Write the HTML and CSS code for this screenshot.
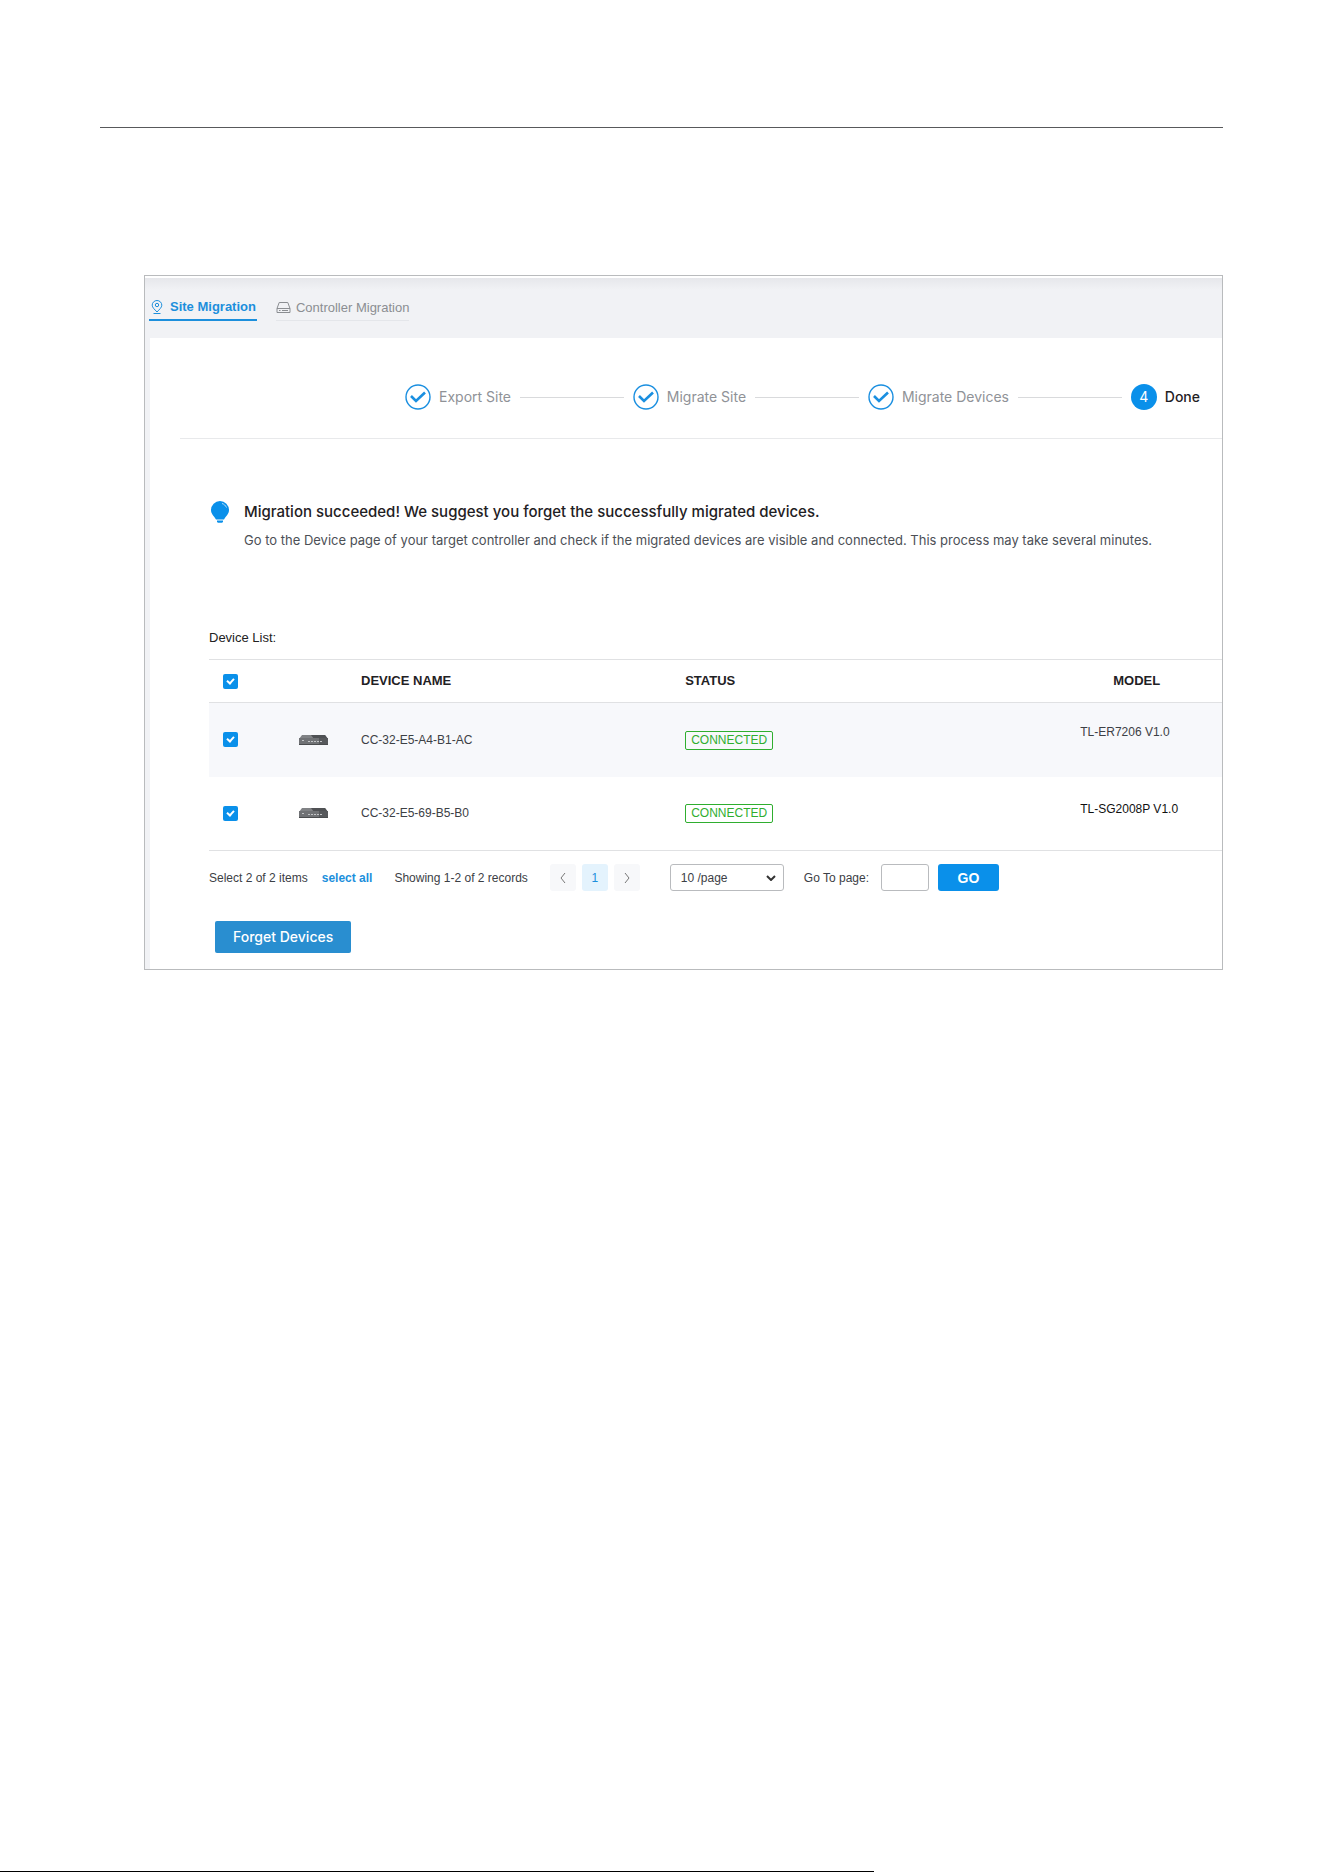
FILE: index.html
```html
<!DOCTYPE html>
<html lang="en">
<head>
    <meta charset="UTF-8">
    <title>Site Migration</title>
    <link rel="stylesheet" href="styles.css">
</head>
<body>
<header class="page-head"></header>
<main class="shot">
    <nav class="tabs">
        <a class="tab current" href="#site">
            <svg width="12" height="15" viewBox="0 0 12 15" fill="none" stroke="currentColor">
                <path d="M6 12C3.500 9.300 1.200 7.500 1.200 5.200a4.800 4.700 0 0 1 9.600 0C10.800 7.500 8.500 9.300 6 12z"/>
                <circle cx="6" cy="5" r="1.700"/>
                <path d="M2.500 13.500h7"/>
            </svg>
            Site Migration
        </a>
        <a class="tab" href="#controller">
            <svg width="15" height="13" viewBox="0 0 15 13" fill="none" stroke="currentColor">
                <path d="M1 7.500L3.200 1.500h8.600L14 7.500v4H1zM1 7.500h13M3 9.500h1.500M6 9.500h6"/>
            </svg>
            Controller Migration
        </a>
    </nav>
    <section class="panel">
        <ol class="steps">
            <li class="step">
                <svg class="tick" viewBox="0 0 26 26"><circle cx="13" cy="13" r="12"/><path d="M6 12l5 5 9-8.500"/></svg>
                Export Site
            </li>
            <li class="line"></li>
            <li class="step">
                <svg class="tick" viewBox="0 0 26 26"><circle cx="13" cy="13" r="12"/><path d="M6 12l5 5 9-8.500"/></svg>
                Migrate Site
            </li>
            <li class="line"></li>
            <li class="step">
                <svg class="tick" viewBox="0 0 26 26"><circle cx="13" cy="13" r="12"/><path d="M6 12l5 5 9-8.500"/></svg>
                Migrate Devices
            </li>
            <li class="line"></li>
            <li class="step active"><span class="num">4</span>Done</li>
        </ol>
        <div class="content">
            <div class="notice">
                <svg width="18" height="23" viewBox="0 0 18 23">
                    <path fill="#0a90ea" d="M9 0a9 9 0 0 1 9 9c0 4-3 6-5 9.500H5C3 15 0 13 0 9a9 9 0 0 1 9-9zM6 19.500h6v1.500l-1 .8H7l-1-.8z"/>
                    <path fill="none" stroke="#b5ddfa" d="M11 2.500c2 .5 3.500 2 4.500 4"/>
                </svg>
                <div>
                    <h1>Migration succeeded! We suggest you forget the successfully migrated devices.</h1>
                    <p>Go to the Device page of your target controller and check if the migrated devices are visible and connected. This process may take several minutes.</p>
                </div>
            </div>
            <h2>Device List:</h2>
            <table class="devices">
                <colgroup>
                    <col class="c-check"><col class="c-icon"><col class="c-name"><col class="c-status"><col>
                </colgroup>
                <thead>
                <tr>
                    <th class="check"><input type="checkbox" aria-label="Select all devices" checked></th>
                    <th></th>
                    <th>DEVICE NAME</th>
                    <th>STATUS</th>
                    <th class="model">MODEL</th>
                </tr>
                </thead>
                <tbody>
                <tr>
                    <td class="check"><input type="checkbox" aria-label="Select CC-32-E5-A4-B1-AC" checked></td>
                    <td>
                        <svg class="device" viewBox="0 0 29 10">
                            <path fill="#808285" d="M3 0h23l3 4H0z"/><path fill="#4f5154" d="M12 0h14l3 4H15z"/>
                            <path fill="#707275" d="M0 3h29v6H0z"/><path fill="#57595c" d="M20 3h9v6h-9z"/>
                            <path stroke="#c2c4c6" stroke-dasharray="2 1" d="M3 5.500h3M9 6.500h14"/><path fill="#4a4c4e" d="M0 9h29v1H0z"/>
                        </svg>
                    </td>
                    <td>CC-32-E5-A4-B1-AC</td>
                    <td><span class="badge">CONNECTED</span></td>
                    <td class="model">TL-ER7206 V1.0</td>
                </tr>
                <tr>
                    <td class="check"><input type="checkbox" aria-label="Select CC-32-E5-69-B5-B0" checked></td>
                    <td>
                        <svg class="device" viewBox="0 0 29 10">
                            <path fill="#808285" d="M3 0h23l3 4H0z"/><path fill="#4f5154" d="M12 0h14l3 4H15z"/>
                            <path fill="#707275" d="M0 3h29v6H0z"/><path fill="#57595c" d="M20 3h9v6h-9z"/>
                            <path stroke="#c2c4c6" stroke-dasharray="2 1" d="M3 5.500h3M9 6.500h14"/><path fill="#4a4c4e" d="M0 9h29v1H0z"/>
                        </svg>
                    </td>
                    <td>CC-32-E5-69-B5-B0</td>
                    <td><span class="badge">CONNECTED</span></td>
                    <td class="model dark">TL-SG2008P V1.0</td>
                </tr>
                </tbody>
            </table>
            <div class="pager">
                <span>Select 2 of 2 items</span>
                <a class="all" href="#all">select all</a>
                <span class="total">Showing 1-2 of 2 records</span>
                <div class="pages">
                    <button type="button" aria-label="Previous page">
                        <svg width="8" height="12" viewBox="0 0 8 12"><path d="M6 1L2 6l4 5"/></svg>
                    </button>
                    <button type="button" class="current">1</button>
                    <button type="button" aria-label="Next page">
                        <svg width="8" height="12" viewBox="0 0 8 12"><path d="M2 1l4 5-4 5"/></svg>
                    </button>
                </div>
                <div class="size">
                    <select aria-label="Items per page">
                        <option>10 /page</option>
                    </select>
                    <svg width="10" height="6" viewBox="0 0 10 6"><path d="M1 1l4 4 4-4"/></svg>
                </div>
                <label for="goto">Go To page:</label>
                <input id="goto" type="text">
                <button type="button" class="go">GO</button>
            </div>
            <button type="button" class="forget">Forget Devices</button>
        </div>
    </section>
</main>
<footer class="page-foot"></footer>
</body>
</html>
```
FILE: styles.css
```css
* {
    box-sizing: border-box;
    margin: 0;
    padding: 0;
}
body {
    display: flex;
    flex-direction: column;
    min-height: 100vh;
    background: #fff;
    color: #3c4045;
    font: 12px/20px "Liberation Sans", Arial, sans-serif;
}
button, input, select {
    font: inherit;
    color: inherit;
}
button {
    border: 0;
    cursor: pointer;
}
ol {
    list-style: none;
}
a {
    text-decoration: none;
}
.page-head {
    margin: 0 101px 0 100px;
    padding-top: 127px;
    border-bottom: 1px solid #58595b;
}
.shot {
    margin: 147px 101px 0 144px;
    padding-top: 2px;
    border: 1px solid #b9bbbd;
}

/* tabs */
.tabs {
    display: flex;
    gap: 19px;
    height: 60px;
    padding: 17px 4px;
    background: linear-gradient(#e6e7eb, #f1f2f5 12px);
}
.tab {
    display: flex;
    align-items: center;
    gap: 5px;
    height: 26px;
    color: #8b8e92;
    font-size: 13px;
    border-bottom: 1px solid #e4e6ea;
}
.tab.current {
    gap: 7px;
    padding: 0 1px 0 2px;
    color: #1c8fdc;
    font-weight: bold;
    border-bottom: 2px solid #1c8fdc;
}

.panel {
    border-left: 5px solid #f1f2f5;
}
.steps {
    display: flex;
    align-items: center;
    gap: 9px;
    height: 101px;
    margin-left: 30px;
    padding: 18px 22px 0 225px;
    border-bottom: 1px solid #e8e9eb;
    font: 14px/20px Inter, "Liberation Sans", sans-serif;
}
.step {
    display: flex;
    align-items: center;
    gap: 8px;
    color: #8f9297;
    white-space: nowrap;
}
.tick, .num {
    width: 26px;
    height: 26px;
}
.tick {
    fill: none;
    stroke: #1a8fe0;
    stroke-width: 1.4;
}
.tick path {
    stroke-width: 2.6;
}
.num {
    line-height: 26px;
    text-align: center;
    color: #fff;
    background: #0a90ea;
    border-radius: 50%;
}
.step.active {
    color: #1f2124;
    font-weight: 500;
}
.step.active .num {
    font-weight: normal;
}
.line {
    flex: 1;
    height: 1px;
    background: #d9dadc;
}

.content {
    padding: 62px 0 16px 59px;
}
.notice {
    display: flex;
    gap: 15px;
    font-family: Inter, "Liberation Sans", sans-serif;
}
.notice h1 {
    font-size: 15px;
    font-weight: 500;
    line-height: 22px;
    color: #1f2124;
}
.notice svg {
    margin-left: 2px;
}
.notice p {
    margin-top: 7px;
    font-size: 13px;
    line-height: 20px;
    color: #4c5056;
}
h2 {
    margin-top: 78px;
    font-size: 13px;
    font-weight: normal;
    line-height: 20px;
    color: #222;
}

/* device table */
.devices {
    width: 100%;
    margin-top: 11px;
    table-layout: fixed;
    border-collapse: collapse;
    border-top: 1px solid #e0e1e3;
    border-bottom: 1px solid #e0e1e3;
}
.c-check {
    width: 90px;
}
.c-icon {
    width: 62px;
}
.c-name {
    width: 32%;
}
.c-status {
    width: 39%;
}
th {
    height: 43px;
    text-align: left;
    font-size: 13px;
    color: #1f2124;
    border-bottom: 1px solid #e0e1e3;
}
td {
    height: 74px;
    vertical-align: middle;
}
tbody tr:first-child {
    background: #f7f8fb;
}
.check {
    padding-left: 14px;
}
.check input {
    display: block;
    width: 15px;
    height: 15px;
    appearance: none;
    border-radius: 2px;
    background: #0a90ea;
}
.check input:checked::after {
    content: "";
    display: block;
    box-sizing: content-box;
    width: 3px;
    height: 5px;
    margin: 3px auto 0;
    border: solid #fff;
    border-width: 0 2px 2px 0;
    transform: rotate(42deg);
}
.device {
    display: block;
    width: 29px;
    height: 10px;
}
.badge {
    display: inline-block;
    padding: 0 5px;
    line-height: 17px;
    color: #2fae2f;
    border: 1px solid #2fae2f;
    border-radius: 2px;
}
th.model {
    padding-left: 33px;
}
td.model {
    padding-bottom: 16px;
}
td.dark {
    padding-bottom: 8px;
    color: #111;
}

/* pagination */
.pager {
    display: flex;
    align-items: center;
    height: 27px;
    margin-top: 13px;
}
.all {
    margin-left: 14px;
    font-weight: bold;
    color: #1c8fdc;
}
.total {
    margin-left: 22px;
}
.pages {
    display: flex;
    gap: 6px;
    margin-left: 22px;
}
.pages button {
    width: 26px;
    height: 27px;
    background: #f7f8fa;
    border-radius: 3px;
}
.pages svg {
    vertical-align: middle;
    fill: none;
    stroke: #777;
}
.pages .current {
    color: #1c8fdc;
    background: #e4f3fd;
}
.size {
    display: grid;
    align-items: center;
    margin-left: 30px;
}
.size select, .size svg {
    grid-area: 1 / 1;
}
.size select {
    width: 114px;
    height: 27px;
    padding-left: 10px;
    appearance: none;
    background: #fff;
    border: 1px solid #b9bbbe;
    border-radius: 3px;
}
.size svg {
    justify-self: end;
    margin-right: 8px;
    fill: none;
    stroke: #333;
    stroke-width: 2;
    pointer-events: none;
}
.pager label {
    margin-left: 20px;
}
.pager input {
    width: 48px;
    height: 27px;
    margin-left: 12px;
    border: 1px solid #b9bbbe;
    border-radius: 3px;
}
.go {
    width: 61px;
    height: 27px;
    margin-left: 9px;
    font-size: 14px;
    font-weight: bold;
    color: #fff;
    background: #0a90ea;
    border-radius: 3px;
}
.forget {
    display: block;
    height: 32px;
    margin: 30px 0 0 6px;
    padding: 0 18px;
    font: 500 14px/32px Inter, "Liberation Sans", sans-serif;
    color: #fff;
    background: #298ed0;
    border-radius: 2px;
}

.page-foot {
    width: 66%;
    margin-top: auto;
    border-bottom: 1px solid #000;
}
```
